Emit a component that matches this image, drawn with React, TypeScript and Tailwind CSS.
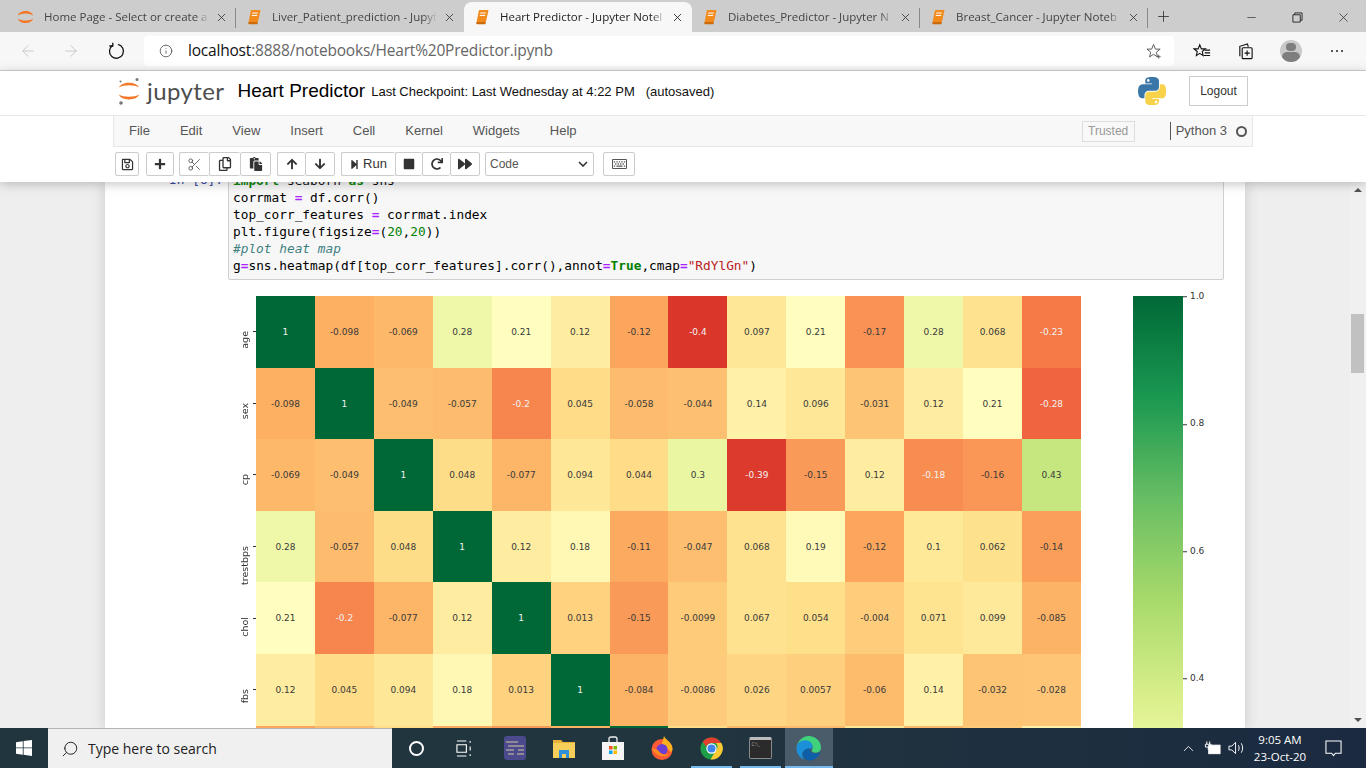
import { ArrowLeft, ArrowRight, ChevronUp, Info, Minus, Plus, Scissors, Search, X } from "lucide-react";
import {
  FaArrowDown, FaArrowUp, FaForward, FaPaste, FaPlus, FaRedo, FaRegCopy, FaRegKeyboard, FaRegSave, FaStepForward, FaStop,
} from "react-icons/fa";

const SANS = "font-['Liberation_Sans',Arial,sans-serif]";

const rows: { label: string; values: number[] }[] = [
  { label: "age", values: [1, -0.098, -0.069, 0.28, 0.21, 0.12, -0.12, -0.4, 0.097, 0.21, -0.17, 0.28, 0.068, -0.23] },
  { label: "sex", values: [-0.098, 1, -0.049, -0.057, -0.2, 0.045, -0.058, -0.044, 0.14, 0.096, -0.031, 0.12, 0.21, -0.28] },
  { label: "cp", values: [-0.069, -0.049, 1, 0.048, -0.077, 0.094, 0.044, 0.3, -0.39, -0.15, 0.12, -0.18, -0.16, 0.43] },
  { label: "trestbps", values: [0.28, -0.057, 0.048, 1, 0.12, 0.18, -0.11, -0.047, 0.068, 0.19, -0.12, 0.1, 0.062, -0.14] },
  { label: "chol", values: [0.21, -0.2, -0.077, 0.12, 1, 0.013, -0.15, -0.0099, 0.067, 0.054, -0.004, 0.071, 0.099, -0.085] },
  { label: "fbs", values: [0.12, 0.045, 0.094, 0.18, 0.013, 1, -0.084, -0.0086, 0.026, 0.0057, -0.06, 0.14, -0.032, -0.028] },
  { label: "restecg", values: [-0.12, -0.058, 0.044, -0.11, -0.15, -0.084, 1, 0.044, -0.071, -0.058, 0.093, -0.072, -0.012, 0.14] },
];

const cmap = ["#a50026", "#d73027", "#f46d43", "#fdae61", "#fee08b", "#ffffbf", "#d9ef8b", "#a6d96a", "#66bd63", "#1a9850", "#006837"];

function cellColor(v: number) {
  const t = Math.min(0.9999, (v + 0.573) / 1.573) * 10;
  const i = Math.floor(t);
  const f = t - i;
  const hex = (c: string, p: number) => parseInt(c.slice(p, p + 2), 16);
  const mix = (p: number) => Math.round(hex(cmap[i], p) + (hex(cmap[Math.min(10, i + 1)], p) - hex(cmap[i], p)) * f);
  return `rgb(${mix(1)},${mix(3)},${mix(5)})`;
}

function BookIcon() {
  return (
    <svg viewBox="0 0 16 16" className="w-4 h-4 shrink-0">
      <path d="M5 1h9.500l-2.600 12H2.600z" fill="#f28a1c" />
      <path d="M2.600 13h9.300l-.5 2.200H3.200c-1 0-1.300-1.200-.6-2.200z" fill="#c96a0c" />
      <path d="M6.200 4h5.600M5.800 6.400h5.400" stroke="#fff" strokeWidth="1" />
    </svg>
  );
}

function JupyterArcs() {
  return (
    <svg viewBox="0 0 18 18" className="w-[17px] h-[18px]">
      <path d="M1 7.500C2.500 1 15.500 1 17 7.500 13.500 4.500 4.500 4.500 1 7.500z" fill="#f37726" />
      <path d="M1 10.500C2.500 17 15.500 17 17 10.500 13.500 13.500 4.500 13.500 1 10.500z" fill="#f37726" />
    </svg>
  );
}

function JupyterMark() {
  return (
    <svg viewBox="0 0 24 28" className="w-[24px] h-[28px]">
      <path d="M2 10.500C4 4 20 4 22 10.500 18 7.500 6 7.500 2 10.500z" fill="#f37726" />
      <path d="M2 17.500C4 24 20 24 22 17.500 18 20.500 6 20.500 2 17.500z" fill="#f37726" />
      <circle cx="20" cy="2.500" r="1.500" fill="#767677" />
      <circle cx="4" cy="26" r="1.800" fill="#767677" />
      <circle cx="3.500" cy="4.500" r="1" fill="#767677" />
    </svg>
  );
}

function Tab({ title, active, home, sep = true }: { title: string; active?: boolean; home?: boolean; sep?: boolean }) {
  return (
    <div className={`w-[228px] h-[30px] flex items-center shrink-0 relative ${active ? "bg-[#f7f7f7] rounded-t-lg" : ""}`}>
      <div className="w-[17px] ml-[9px] mr-[10px] flex justify-center shrink-0">
        {home ? <JupyterArcs /> : <BookIcon />}
      </div>
      <span className={`w-[165px] -mt-[1px] overflow-hidden whitespace-nowrap text-[11.5px] [mask-image:linear-gradient(to_right,#000_92%,transparent)] ${active ? "text-[#222]" : "text-[#444]"}`}>
        {title}
      </span>
      <X className={`w-[13px] h-[13px] ml-[6px] ${active ? "text-[#111]" : "text-[#333]"}`} strokeWidth={1.5} />
      {sep && <div className="absolute right-0 top-[6px] h-[20px] w-px bg-[#8a8a8a]" />}
    </div>
  );
}

function BrowserChrome() {
  return (
    <div className="shrink-0 font-['Open_Sans',sans-serif]">
      <div className="h-[32px] bg-[#cdcdcd] flex items-end pl-[8px]">
        <Tab title="Home Page - Select or create a" home />
        <Tab title="Liver_Patient_prediction - Jupyt" sep={false} />
        <Tab title="Heart Predictor - Jupyter Notel" active sep={false} />
        <Tab title="Diabetes_Predictor - Jupyter N" />
        <Tab title="Breast_Cancer - Jupyter Noteb" />
        <Plus className="w-[17px] h-[17px] ml-[7px] mb-[7px] text-[#333]" strokeWidth={1.2} />
        <div className="ml-auto flex items-center h-[30px] text-[#222]">
          <div className="w-[46px] flex justify-center"><Minus className="w-[13px] h-[13px]" strokeWidth={1.2} /></div>
          <div className="w-[46px] flex justify-center">
            <svg viewBox="0 0 12 12" className="w-[11px] h-[11px]" fill="none" stroke="currentColor">
              <path d="M3 3V1h8v8H9" />
              <path d="M1 3h8v8H1z" />
            </svg>
          </div>
          <div className="w-[46px] flex justify-center"><X className="w-[15px] h-[15px]" strokeWidth={1.1} /></div>
        </div>
      </div>
      <div className="h-[39px] bg-[#f7f7f7] border-b border-[#cfcfcf] flex items-center">
        <ArrowLeft className="w-[18px] h-[18px] ml-[19px] text-[#c4c4c4]" strokeWidth={1.2} />
        <ArrowRight className="w-[18px] h-[18px] ml-[25px] text-[#c4c4c4]" strokeWidth={1.2} />
        <svg viewBox="0 0 18 18" className="w-[18px] h-[18px] ml-[27px]" fill="none" stroke="#111" strokeWidth="1.3">
          <path d="M5.600 3.400A7 7 0 1 0 11 2.400" />
          <path d="M5.800 0.800v3.200H2.400" />
        </svg>
        <div className="ml-[19px] w-[1030px] h-[30px] bg-white rounded flex items-center">
          <Info className="w-[14px] h-[14px] ml-[15px] text-[#444]" strokeWidth={1.3} />
          <span className="ml-[15px] text-[15.5px] tracking-[-0.2px] text-[#666]">
            <span className="text-[#111]">localhost</span>:8888/notebooks/Heart%20Predictor.ipynb
          </span>
          <svg viewBox="0 0 18 18" className="w-[17px] h-[17px] ml-auto mr-[11px]" fill="none" stroke="#555" strokeWidth="1">
            <path d="M8 1.500l2 5h5l-4 3.200 1.200 5L8 12l-4.200 2.700L5 9.700 1 6.500h5z" />
            <path d="M13.500 12.500v4M11.500 14.500h4" />
          </svg>
        </div>
        <svg viewBox="0 0 20 18" className="w-[18px] h-[17px] ml-[19px]" fill="none" stroke="#111" strokeWidth="1.2">
          <path d="M7.500 1.500l1.800 4.600h4.500L10.300 9l1 4.600-3.800-2.500-3.800 2.500 1-4.600L1.200 6.100h4.500z" />
          <path d="M13 7.500h6M13 10.500h6M12 13.500h7" />
        </svg>
        <svg viewBox="0 0 18 18" className="w-[17px] h-[17px] ml-[26px]" fill="none" stroke="#111" strokeWidth="1.2">
          <path d="M3 14V3.500L11 1l1 3" />
          <rect x="5.500" y="5" width="10.500" height="11.500" rx="1" fill="#f7f7f7" />
          <path d="M10.700 8v5.500M8 10.700h5.500" />
        </svg>
        <div className="w-[22px] h-[22px] ml-[26px] rounded-full bg-[#c9c9c9] overflow-hidden flex flex-col items-center">
          <div className="w-[10px] h-[10px] rounded-full bg-[#7e7e7e] mt-[3px]" />
          <div className="w-[18px] h-[14px] rounded-full bg-[#7e7e7e] mt-[1px]" />
        </div>
        <div className="ml-[29px] flex gap-[3px]">
          <i className="w-[2px] h-[2px] bg-[#222] rounded-full" />
          <i className="w-[2px] h-[2px] bg-[#222] rounded-full" />
          <i className="w-[2px] h-[2px] bg-[#222] rounded-full" />
        </div>
      </div>
    </div>
  );
}

function PythonLogo() {
  return (
    <svg viewBox="0 0 110 110" className="w-[28px] h-[28px]">
      <path fill="#3a76a8" d="M54.919 0.001c-4.584.022-8.961.413-12.812 1.095C30.76 3.099 28.7 7.295 28.7 15.032V25.25h26.813v3.406H18.64c-7.792 0-14.616 4.684-16.75 13.594-2.462 10.213-2.571 16.586 0 27.25 1.906 7.938 6.458 13.594 14.25 13.594h9.219v-12.25c0-8.85 7.657-16.656 16.75-16.656h26.781c7.455 0 13.406-6.138 13.406-13.625V15.032c0-7.266-6.13-12.725-13.406-13.937C64.282.328 59.502-.02 54.919.001zM40.419 8.219c2.77 0 5.031 2.299 5.031 5.125 0 2.816-2.262 5.094-5.031 5.094-2.78 0-5.031-2.278-5.031-5.094 0-2.826 2.251-5.125 5.031-5.125z" />
      <path fill="#f8d34a" d="M85.638 28.657v11.906c0 9.231-7.826 17-16.75 17H42.106c-7.336 0-13.406 6.278-13.406 13.625v25.531c0 7.266 6.319 11.54 13.406 13.625 8.487 2.496 16.626 2.947 26.781 0 6.75-1.954 13.406-5.888 13.406-13.625V86.5H55.513v-3.405H95.7c7.792 0 10.696-5.436 13.406-13.594 2.8-8.399 2.68-16.476 0-27.25-1.925-7.758-5.604-13.594-13.406-13.594zM70.575 93.313c2.78 0 5.031 2.278 5.031 5.094 0 2.826-2.251 5.125-5.031 5.125-2.77 0-5.031-2.299-5.031-5.125 0-2.816 2.262-5.094 5.031-5.094z" />
    </svg>
  );
}

function ToolBtn({ w, children, last = true }: { w: string; children: React.ReactNode; last?: boolean }) {
  return (
    <div className={`${w} h-[24px] flex items-center justify-center gap-[4px] bg-white border border-[#cccccc] text-[#333] text-[13px] rounded-[2px] ${last ? "" : "border-r-0"}`}>
      {children}
    </div>
  );
}

function JupyterHeader() {
  const ic = "w-[12px] h-[12px]";
  const wide = "w-[14px] h-[14px]";
  return (
    <div className={`relative z-10 shrink-0 h-[111px] bg-white shadow-[0_2px_10px_rgba(87,87,87,0.35)] ${SANS}`}>
      <div className="h-[45px] border-b border-[#e7e7e7] flex items-center pl-[117px] pr-[118px] pb-[4px]">
        <JupyterMark />
        <span className="ml-[6px] text-[24px] tracking-[0.4px] text-[#4e4e4e] font-['Lato',sans-serif]">jupyter</span>
        <span className="ml-[13px] text-[19px] text-black">Heart Predictor</span>
        <span className="ml-[6px] text-[13px] text-[#111] mt-[2px]">Last Checkpoint: Last Wednesday at 4:22 PM</span>
        <span className="ml-[11px] text-[13px] text-[#111] mt-[2px]">(autosaved)</span>
        <div className="ml-auto"><PythonLogo /></div>
        <div className="ml-[23px] w-[59px] h-[30px] border border-[#ccc] flex items-center justify-center text-[12px] text-[#333]">Logout</div>
      </div>
      <div className="ml-[113px] w-[1140px] h-[31px] bg-[#f8f8f8] border border-t-0 border-[#e7e7e7] flex items-center pl-[15px] gap-[30px] text-[13px] text-[#555]">
        <span>File</span>
        <span>Edit</span>
        <span>View</span>
        <span>Insert</span>
        <span>Cell</span>
        <span>Kernel</span>
        <span>Widgets</span>
        <span>Help</span>
        <div className="ml-auto flex items-center">
          <div className="w-[53px] h-[21px] border border-[#ddd] flex items-center justify-center text-[12px] text-[#999] mr-[35px]">Trusted</div>
          <div className="w-px h-[18px] bg-[#555] mr-[5px]" />
          <span className="text-[#555] mr-[9px]">Python 3</span>
          <div className="w-[11px] h-[11px] rounded-full border-[2px] border-[#555] mr-[5px]" />
        </div>
      </div>
      <div className="ml-[115px] mt-[5px] flex items-center">
        <ToolBtn w="w-[24px]"><FaRegSave className="w-[13px] h-[13px]" /></ToolBtn>
        <div className="w-[7px]" />
        <ToolBtn w="w-[28px]"><FaPlus className={ic} /></ToolBtn>
        <div className="w-[5px]" />
        <ToolBtn w="w-[30px]" last={false}><Scissors className="w-[15px] h-[15px] text-[#555]" strokeWidth={1.4} /></ToolBtn>
        <ToolBtn w="w-[31px]" last={false}><FaRegCopy className={wide} /></ToolBtn>
        <ToolBtn w="w-[31px]"><FaPaste className={wide} /></ToolBtn>
        <div className="w-[6px]" />
        <ToolBtn w="w-[28px]" last={false}><FaArrowUp className={ic} /></ToolBtn>
        <ToolBtn w="w-[30px]"><FaArrowDown className={ic} /></ToolBtn>
        <div className="w-[6px]" />
        <ToolBtn w="w-[54px]" last={false}><FaStepForward className="w-[9px] h-[11px]" />Run</ToolBtn>
        <ToolBtn w="w-[27px]" last={false}><FaStop className={ic} /></ToolBtn>
        <ToolBtn w="w-[28px]" last={false}><FaRedo className={ic} /></ToolBtn>
        <ToolBtn w="w-[30px]"><FaForward className={wide} /></ToolBtn>
        <div className="w-[5px]" />
        <div className="w-[109px] h-[24px] bg-white border border-[#ccc] rounded-[2px] flex items-center pl-[4px] text-[12px] text-[#555]">
          Code
          <svg viewBox="0 0 10 6" className="w-[10px] h-[6px] ml-auto mr-[5px]" fill="none" stroke="#333" strokeWidth="1.6"><path d="M1 1l4 4 4-4" /></svg>
        </div>
        <div className="w-[9px]" />
        <ToolBtn w="w-[32px]"><FaRegKeyboard className="w-[15px] h-[14px] text-[#555]" /></ToolBtn>
      </div>
    </div>
  );
}

function CodeCell() {
  const k = "text-[#008000] font-bold";
  const op = "text-[#aa22ff] font-bold";
  const num = "text-[#008000]";
  return (
    <div className="flex -mt-[16px]">
      <div className="w-[123px] text-right pr-[5px] pt-[5px] text-[#303f9f] text-[12.8px] leading-[17px] font-['DejaVu_Sans_Mono',monospace]">In&nbsp;[6]:</div>
      <pre className="w-[996px] h-[114px] bg-[#f7f7f7] border border-[#cfcfcf] rounded-[2px] pl-[4px] pt-[5px] text-[12.8px] leading-[17px] text-black font-['DejaVu_Sans_Mono',monospace]">
        <span className={k}>import</span> seaborn <span className={k}>as</span> sns{"\n"}
        corrmat <span className={op}>=</span> df.corr(){"\n"}
        top_corr_features <span className={op}>=</span> corrmat.index{"\n"}
        plt.figure(figsize<span className={op}>=</span>(<span className={num}>20</span>,<span className={num}>20</span>)){"\n"}
        <span className="italic text-[#408080]">#plot heat map</span>{"\n"}
        g<span className={op}>=</span>sns.heatmap(df[top_corr_features].corr(),annot<span className={op}>=</span><span className={k}>True</span>,cmap<span className={op}>=</span><span className="text-[#ba2121]">"RdYlGn"</span>)
      </pre>
    </div>
  );
}

function Heatmap() {
  return (
    <div className="flex mt-[16px] ml-[123px] font-['DejaVu_Sans',sans-serif] text-[9px]">
      <div className="w-[28px]">
        {rows.map((r) => (
          <div key={r.label} className="h-[71.6px] flex items-center justify-end">
            {/* tick labels hang below their tick, as in the figure */}
            <span className="self-start mt-[35px] [writing-mode:vertical-rl] rotate-180 text-[#333] text-[9.5px] -mr-[1px]">{r.label}</span>
            <div className="w-[3px] h-px bg-[#333] ml-[2px]" />
          </div>
        ))}
      </div>
      <div className="w-[825px] shrink-0">
        {rows.map((r) => (
          <div key={r.label} className="flex h-[71.6px]">
            {r.values.map((v, i) => (
              <div
                key={i}
                className={`flex-1 flex items-center justify-center pt-[2px] ${v === 1 || v <= -0.18 ? "text-[#f2f2f2]" : "text-[#3a3a3a]"}`}
                style={{ backgroundColor: cellColor(v) }}
              >
                {v}
              </div>
            ))}
          </div>
        ))}
      </div>
      <div className="w-[50px] h-[1003px] ml-[52px] shrink-0 bg-[linear-gradient(to_bottom,#006837,#1a9850,#66bd63,#a6d96a,#d9ef8b,#ffffbf,#fee08b,#fdae61,#f46d43,#d73027,#a50026)]" />
      <div className="text-[#333] pt-[1px]">
        {["1.0", "0.8", "0.6", "0.4"].map((t) => (
          <div key={t} className="h-[127.4px] flex items-start">
            <div className="flex items-center -translate-y-1/2">
              <div className="w-[4px] h-px bg-[#333] mr-[3px]" />
              {t}
            </div>
          </div>
        ))}
      </div>
    </div>
  );
}

function Scrollbar() {
  return (
    <div className="w-[17px] shrink-0 ml-auto bg-[#f0f0f0] flex flex-col items-center">
      <div className="w-0 h-0 mt-[6px] border-x-[4px] border-x-transparent border-b-[4px] border-b-[#505050]" />
      <div className="w-[13px] h-[59px] mt-[122px] bg-[#c1c1c1]" />
      <div className="w-0 h-0 mt-auto mb-[6px] border-x-[4px] border-x-transparent border-t-[4px] border-t-[#505050]" />
    </div>
  );
}

function Notebook() {
  return (
    <div className="flex-1 min-h-0 flex bg-[#eeeeee] overflow-hidden">
      <div className="ml-[105px] w-[1140px] shrink-0 bg-white shadow-[0_0_12px_1px_rgba(87,87,87,0.2)]">
        <CodeCell />
        <Heatmap />
      </div>
      <Scrollbar />
    </div>
  );
}

function TaskIcon({ children, on, active, w = "w-[49px]" }: { children: React.ReactNode; on?: boolean; active?: boolean; w?: string }) {
  return (
    <div className={`${w} h-[40px] flex items-center justify-center relative ${active ? "bg-[#4a5b69]" : ""}`}>
      {children}
      {on && <div className={`absolute bottom-0 h-[2px] bg-[#76b9ed] ${active ? "inset-x-0" : "inset-x-[4px]"}`} />}
    </div>
  );
}

function Taskbar() {
  return (
    <div className="shrink-0 h-[40px] flex items-center bg-[linear-gradient(to_right,#21353f,#21353f_50%,#1b2a40)] text-white font-['Open_Sans',sans-serif]">
      <div className="w-[48px] flex justify-center">
        <svg viewBox="0 0 16 16" className="w-[16px] h-[16px]" fill="#fff">
          <path d="M0 2.200l6.800-1v6.300H0zM7.600 1.100L16 0v7.500H7.600zM0 8.300h6.800v6.400L0 13.800zM7.600 8.300H16V16l-8.400-1.200z" />
        </svg>
      </div>
      <div className="w-[344px] h-[40px] bg-[#f0f0f0] flex items-center pl-[13px] border-t border-[#b5b5b5] text-[#222]">
        <Search className="w-[18px] h-[18px] -scale-x-100" strokeWidth={1.3} />
        <span className="ml-[9px] text-[14px]">Type here to search</span>
      </div>
      <TaskIcon w="w-[48px]"><div className="w-[15px] h-[15px] rounded-full border-[2px] border-white" /></TaskIcon>
      <TaskIcon w="w-[48px]">
        <svg viewBox="0 0 18 18" className="w-[17px] h-[17px]" fill="none" stroke="#fff" strokeWidth="1.2">
          <path d="M1 1h10M1 17h10M1 5h10v8H1zM15 1v2M15 7v4M15 15v2" />
        </svg>
      </TaskIcon>
      <div className="w-[2.500px]" />
      <TaskIcon>
        <svg viewBox="0 0 22 24" className="w-[22px] h-[24px]">
          <rect width="22" height="24" rx="3" fill="#4a4a8c" />
          <path d="M2 6h12M4 10h16M2 14h8M14 14h6M4 18h6M13 18h7" stroke="#d8c9a0" strokeWidth="1" />
        </svg>
      </TaskIcon>
      <TaskIcon>
        <svg viewBox="0 0 22 20" className="w-[22px] h-[20px]">
          <path d="M0 2h8l2 2h12v3H0z" fill="#e8b23a" />
          <path d="M0 5h22v15H0z" fill="#f6cf5a" />
          <path d="M6 12h10v8H6z" fill="#2f8fd8" />
          <path d="M9 16h4v4H9z" fill="#f6cf5a" />
        </svg>
      </TaskIcon>
      <TaskIcon>
        <svg viewBox="0 0 22 24" className="w-[22px] h-[24px]">
          <path d="M7 6V3a2 2 0 0 1 2-2h4a2 2 0 0 1 2 2v3" fill="none" stroke="#eee" strokeWidth="1.3" />
          <path d="M0 6h22v18H0z" fill="#f5f5f5" />
          <path d="M7 10h3.500v3.500H7z" fill="#f25022" />
          <path d="M11.500 10H15v3.500h-3.500z" fill="#7fba00" />
          <path d="M7 14.500h3.500V18H7z" fill="#00a4ef" />
          <path d="M11.500 14.500H15V18h-3.500z" fill="#ffb900" />
        </svg>
      </TaskIcon>
      <TaskIcon>
        <svg viewBox="0 0 24 24" className="w-[24px] h-[24px]">
          <circle cx="12" cy="13.500" r="10.500" fill="#ff5a36" />
          <path d="M14 0c1 3 6 5 8 10 1.500 4-1 6-1 6L12 8z" fill="#ffb01f" />
          <circle cx="12" cy="13.500" r="5.500" fill="#6b3fd4" />
          <path d="M2 12c2 7 12 12 19 5-6 3-11 1-13-3z" fill="#ff8a1f" />
        </svg>
      </TaskIcon>
      <TaskIcon on>
        <svg viewBox="0 0 24 24" className="w-[23px] h-[23px]">
          <circle cx="12" cy="12" r="11.500" fill="#1f9e48" />
          <path d="M12 .5a11.500 11.500 0 0 1 10 5.800H12a5.700 5.700 0 0 0-5.500 4L2.900 5A11.500 11.500 0 0 1 12 .5z" fill="#e23d2e" />
          <path d="M22.200 6.300A11.500 11.500 0 0 1 11 23.500l5-8.600a5.700 5.700 0 0 0 .7-8.600z" fill="#fcc934" />
          <circle cx="12" cy="12" r="5.400" fill="#fff" />
          <circle cx="12" cy="12" r="4.200" fill="#3f83ec" />
        </svg>
      </TaskIcon>
      <TaskIcon on>
        <div className="w-[23px] h-[22px] rounded-[2px] bg-[#2b2b2b] border border-[#8a8a8a] border-t-[3px] border-t-[#bdbdbd] flex items-start pl-[2px] pt-[2px]">
          <span className="text-[5px] leading-none text-[#aaa]">C:\_</span>
        </div>
      </TaskIcon>
      <TaskIcon on active w="w-[48px]">
        <svg viewBox="0 0 24 24" className="w-[25px] h-[25px]">
          <path d="M12 0c7 0 12 5 12 11 0 3-2 5-5 5-2.500 0-4-1-4-2 0-.6 1-1 1-3 0-3-3-6-7-6-5 0-8.500 3-9 7C1.500 5 6 0 12 0z" fill="#3fd17c" />
          <path d="M.5 12c0-5 4-8 8.500-8 4 0 7 3 7 6 0 1-.5 2-2 2-4 0-8 2-8 6 0 2 1 4 2.500 5C3.500 21.500.5 17 .5 12z" fill="#1b8fd8" />
          <path d="M6.500 17.500c0-3.500 3-6 7-5.500-.5 3 2 5 6 4.500 2 0 3-.5 4-1.500-1 5-6 8.500-11 8.500-3.500 0-6-3-6-6z" fill="#0f5fa8" />
        </svg>
      </TaskIcon>
      <div className="ml-auto flex items-center">
        <ChevronUp className="w-[17px] h-[17px]" strokeWidth={1.2} />
        <svg viewBox="0 0 18 14" className="w-[17px] h-[14px] ml-[7px]" fill="none" stroke="#fff">
          <path d="M3 0v3M6 0v3M1.500 3h6v3h-6zM4.500 6v3" />
          <rect x="5" y="4" width="12" height="9" fill="#fff" />
        </svg>
        <svg viewBox="0 0 18 14" className="w-[17px] h-[14px] ml-[7px]" fill="none" stroke="#fff">
          <path d="M1 5h3l4-4v12l-4-4H1zM11 4c1 2 1 4 0 6M14 2c2 3 2 7 0 10" />
        </svg>
        <div className="w-[70px] text-center text-[11.5px] leading-[17px]">
          <div>9:05 AM</div>
          <div>23-Oct-20</div>
        </div>
        <div className="w-[36px] mr-[15px] flex justify-center">
          <svg viewBox="0 0 18 18" className="w-[17px] h-[17px]" fill="none" stroke="#fff" strokeWidth="1.1">
            <path d="M1 1h16v13h-6l-2 2.500L7 14H1z" />
          </svg>
        </div>
      </div>
    </div>
  );
}

export default function App() {
  return (
    <div className="w-full h-screen flex flex-col overflow-hidden">
      <BrowserChrome />
      <JupyterHeader />
      <Notebook />
      <Taskbar />
    </div>
  );
}
